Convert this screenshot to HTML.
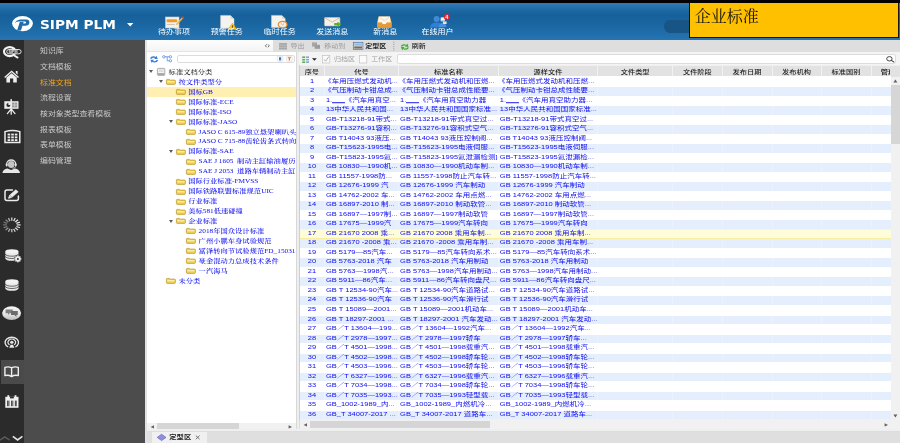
<!DOCTYPE html>
<html lang="zh-CN">
<head>
<meta charset="utf-8">
<title>SIPM PLM</title>
<style>
html,body{margin:0;padding:0;}
body{width:900px;height:443px;overflow:hidden;position:relative;background:#dddddd;font-family:"Liberation Sans","Noto Sans CJK SC",sans-serif;}
.abs,.abs *{position:absolute;}
div{position:absolute;box-sizing:border-box;white-space:nowrap;}
svg{position:absolute;overflow:visible;}
#blk{left:0;top:0;width:900px;height:3px;background:#050002;}
#hdr{left:0;top:2.8px;width:900px;height:37px;background:linear-gradient(to bottom,#2f7ab7 0%,#2873b0 8%,#1a659f 24%,#16619b 32%,#19659f 55%,#1f6daa 80%,#2575b3 100%);}
#logo-t{left:39.6px;top:16.6px;font:bold 12.3px/16px "DejaVu Sans","Liberation Sans",sans-serif;color:#fff;transform:scaleX(1.115);transform-origin:0 0;}
.hl{color:#fff;font-size:8px;line-height:11.25px;top:28.1px;text-align:center;width:40px;transform:scaleY(0.8);transform-origin:0 0;}
#pill{left:664px;top:20px;width:60px;height:12.7px;border-radius:6.4px;background:#195584;}
#ybox{left:689px;top:2.8px;width:210px;height:35.2px;background:#ffc000;border:1px solid #1b1400;border-top:none;}
#ybox div{left:4.8px;top:3.2px;font:16px/22px "Liberation Serif","Noto Serif CJK SC",serif;color:#111;}
#ibar{left:0;top:39.6px;width:24px;height:404px;background:#2b2b2b;}
#side{left:24px;top:39.6px;width:120.7px;height:404px;background:#4c4c4c;}
#iact{left:1px;top:360px;width:23px;height:24.3px;background:#4a4a4a;}
.mi{left:40px;color:#c9c9c9;font-size:7.9px;line-height:12.5px;transform:scaleY(0.8);transform-origin:0 0;}
.mi.on{color:#f2a31c;}
#strip{left:144.6px;top:39.6px;width:2.7px;height:404px;background:#e2e2e2;}
#tp{left:147.3px;top:39.6px;width:149px;height:391.6px;background:#fff;}
#tp1{left:147.3px;top:39.6px;width:126px;height:12.6px;background:linear-gradient(#fdfdfd,#f4f4f4);border-bottom:1px solid #e4e4e4;}
#tb1{left:273.3px;top:39.6px;width:626.7px;height:12.6px;background:#dedede;}
#tb2{left:299.3px;top:52.2px;width:600.7px;height:13px;background:#f4f4f4;}
#split{left:296.3px;top:52.2px;width:3.2px;height:379px;background:#eeeeee;border-left:1px solid #d8d8d8;}
.inp{background:#fff;border:1px solid #dcdcdc;border-radius:2px;}
.tt{font-size:7px;line-height:11.25px;color:#333;margin-top:0.8px;transform:scaleY(0.8);transform-origin:0 0;}
.tg{font-size:7px;line-height:11.25px;color:#9a9a9a;margin-top:0.8px;transform:scaleY(0.8);transform-origin:0 0;}
.tr{left:147px;width:148.8px;height:9.95px;overflow:hidden;}
.tr.sel{background:#ffefb0;}
.tx{font-family:"Liberation Serif","Noto Serif CJK SC",serif;font-size:7.3px;line-height:12.44px;top:0.9px;color:#0808f2;font-weight:500;transform:scaleY(0.8);transform-origin:0 0;}
.tx.k{color:#1a1a1a;}
.ar{width:0;height:0;border-left:2.1px solid transparent;border-right:2.1px solid transparent;border-top:3.2px solid #5c5c5c;top:3.4px;}
#gh{left:299.5px;top:65px;width:600.5px;height:11.7px;background:#e2e2e2;border-top:1px solid #efefef;}
.hc{top:68.3px;height:11.25px;font-size:7.2px;line-height:11.25px;transform:scaleY(0.8);transform-origin:0 0;color:#1e1e1e;text-align:center;font-weight:500;}
.hs{top:65.2px;width:1px;height:11.4px;background:#f2f2f2;}
.gr{left:299.5px;width:591.8px;height:9.514px;background:#fff;}
.gr.e{background:linear-gradient(to bottom,#fff 0.55px,#e5eefd 0.56px);}
.gr.y{background:linear-gradient(to bottom,#f8f0ac 0,#fffcda 0.9px,#fffcda 8.5px,#f7ee9f 9.3px);height:9.9px;z-index:2;}
.gr div{top:0;height:11.89px;line-height:11.25px;font-size:7.5px;color:#0c0cf0;overflow:hidden;font-weight:400;transform:scaleY(0.8);transform-origin:0 0;}
.gr span.q{margin-left:-1.7px;}
.gr span.u{background:linear-gradient(#0c0cf0,#0c0cf0) no-repeat 0 7.3px / 100% 1px;}
.gr .n{left:0;width:25px;text-align:center;}
.gr .a{left:26.4px;width:73.4px;}
.gr .b{left:100.6px;width:98px;}
.gr .c{left:200.3px;width:98px;}
.cs{width:1px;top:76.65px;height:342.6px;background:rgba(255,255,255,0.25);}
#vs{left:890.9px;top:76.6px;width:9.1px;height:343px;background:#f1f1f1;}
#vst{left:891.2px;top:85px;width:8.8px;height:58.7px;background:#d6d6d6;}
#hs{left:299.5px;top:419.3px;width:600.5px;height:9.4px;background:#f1f1f1;}
#hst{left:310px;top:421px;width:180px;height:7.4px;background:#d5d5d5;}
#ths{left:147.3px;top:422.6px;width:149px;height:8.4px;background:#f1f1f1;}
#thst{left:156.7px;top:423px;width:82px;height:7.4px;background:#d6d6d6;}
#bot{left:147.3px;top:431.6px;width:752.7px;height:11.8px;background:#dfdfdf;}
#tab{left:152px;top:431.6px;width:55.4px;height:11.8px;background:#f0f0f0;}
#tab div{left:17.3px;top:1.4px;font-size:7.3px;line-height:11.25px;font-weight:bold;color:#222;transform:scaleY(0.8);transform-origin:0 0;}
</style>
</head>
<body>
<div id="root" style="left:0;top:0;width:900px;height:443px;will-change:transform;">
<div id="blk"></div>
<div id="hdr"></div>

<svg style="left:11px;top:15px" width="24" height="17" viewBox="0 0 24 17">
<ellipse cx="11.5" cy="8.6" rx="10.4" ry="7.7" fill="#fff"/>
<path d="M9.6 4.4 L15.2 4.4 Q18.6 4.6 18.4 7.4 Q18.2 10.6 14.2 10.8 L11.4 10.8 L10 15.4 L6 15.8 L8.8 7 L12.6 7 L12.2 8.6 L14 8.6 Q15 8.4 15.1 7.5 Q15.1 6.6 14 6.6 L7 6.6 Q5 6.8 4 8.6 Q4.6 5 9.6 4.4 Z" fill="#1f6bab"/>
</svg>
<div id="logo-t">SIPM PLM</div>
<svg style="left:126.6px;top:23px" width="7" height="4" viewBox="0 0 7 4"><path d="M0 0 L6.4 0 L3.2 3.4 Z" fill="#fff"/></svg>
<svg style="left:164.5px;top:15.5px" width="20" height="13" viewBox="0 0 20 13">
<rect x="0.5" y="1" width="13.5" height="11" fill="#f3f1ec" stroke="#cfcac0" stroke-width="0.6"/>
<rect x="1.6" y="3.2" width="10.6" height="3.1" rx="1" fill="#f39a22"/>
<rect x="1.8" y="8" width="8" height="1" fill="#c9c5bb"/>
<path d="M17.6 0.4 L19 1.6 L12.6 8.6 L10.8 9.2 L11.4 7.4 Z" fill="#e8b25a"/>
<path d="M17.6 0.4 L19 1.6 L18 2.7 L16.6 1.5 Z" fill="#d2312b"/>
</svg>
<div class="hl" style="left:154px">待办事项</div>
<svg style="left:219.5px;top:14.6px" width="18" height="15" viewBox="0 0 18 15">
<path d="M0.6 0.4 L10.4 0.4 L14 4 L14 13.2 L0.6 13.2 Z" fill="#f4f3ef" stroke="#d6d3ca" stroke-width="0.5"/>
<path d="M10.4 0.4 L10.4 4 L14 4 Z" fill="#dcd9d0"/>
<path d="M12.4 8.2 L16.8 14.4 L8 14.4 Z" fill="#f7c51d" stroke="#d9a400" stroke-width="0.5"/>
<rect x="12" y="10.4" width="0.9" height="2.2" fill="#5a4500"/>
</svg>
<div class="hl" style="left:206.7px">预警任务</div>
<svg style="left:271.4px;top:15.2px" width="17" height="14" viewBox="0 0 17 14">
<path d="M0.5 0.4 L10.8 0.4 L14.2 3.8 L14.2 12.4 L0.5 12.4 Z" fill="#f4f3ef" stroke="#d6d3ca" stroke-width="0.5"/>
<path d="M10.8 0.4 L10.8 3.8 L14.2 3.8 Z" fill="#dcd9d0"/>
<ellipse cx="11.6" cy="9.6" rx="4.4" ry="3.2" fill="#f1eee8" stroke="#f08a1c" stroke-width="1.2"/>
<path d="M10.2 8.6 L11.6 9.9 L13 8.6" fill="none" stroke="#9a8f80" stroke-width="0.6"/>
</svg>
<div class="hl" style="left:259.7px">临时任务</div>
<svg style="left:323.6px;top:17.4px" width="18" height="10" viewBox="0 0 18 10">
<rect x="0.5" y="0.5" width="15.4" height="8.4" rx="0.8" fill="#f5f1e6" stroke="#c9c2ae" stroke-width="0.6"/>
<path d="M0.8 0.8 L8.2 5.2 L15.6 0.8" fill="none" stroke="#c8b48e" stroke-width="0.8"/>
<path d="M10.2 6 L13.4 6 L13.4 4.4 L17 7.2 L13.4 9.9 L13.4 8.4 L10.2 8.4 Z" fill="#58b32c"/>
</svg>
<div class="hl" style="left:312.2px">发送消息</div>
<svg style="left:377.4px;top:16.2px" width="16" height="12" viewBox="0 0 16 12">
<path d="M1.6 0.4 L13 0.4 L14.6 6.6 L14.6 10.8 Q14.6 11.7 13.6 11.7 L1 11.7 Q0 11.7 0 10.8 L0 6.6 Z" fill="#e9a23f"/>
<path d="M1.8 0.6 L12.8 0.6 L13.8 6.4 L9.6 6.4 L9 8 L5.6 8 L5 6.4 L0.8 6.4 Z" fill="#fbf7f0"/>
<path d="M2.6 1.4 L7.3 4.6 L12 1.4" fill="none" stroke="#f0c79a" stroke-width="0.7"/>
<path d="M0 6.8 L4.8 6.8 L5.4 8.4 L9.2 8.4 L9.8 6.8 L14.6 6.8 L14.6 10.8 Q14.6 11.7 13.6 11.7 L1 11.7 Q0 11.7 0 10.8 Z" fill="#e59a35"/>
</svg>
<div class="hl" style="left:365.2px">新消息</div>
<svg style="left:429px;top:14px" width="23" height="14" viewBox="0 0 23 14">
<circle cx="7.6" cy="5" r="3" fill="#3f8ad8"/>
<path d="M1 13.4 Q1.4 8.4 7.6 8.4 Q13.8 8.4 14.2 13.4 Z" fill="#2f7fd6"/>
<circle cx="13.4" cy="6" r="2.2" fill="#5a9be0"/>
<path d="M9.6 13 Q10.4 9 13.6 9 Q17 9 17.6 13 Z" fill="#4a90dc"/>
<rect x="11.8" y="3.4" width="4.2" height="3.2" fill="#eef2f6"/>
<rect x="14" y="7.4" width="3.6" height="2.6" fill="#e6e2d8"/>
<circle cx="17.8" cy="2.9" r="2.9" fill="#e3262c"/>
</svg>
<div style="left:445.3px;top:13.9px;font:bold 5.4px/6px 'Liberation Sans',sans-serif;color:#fff">4</div>
<div class="hl" style="left:417.5px">在线用户</div>
<div id="pill"></div>
<div id="ybox"><div>企业标准</div></div>
<div id="ibar"></div><div id="side"></div><div id="iact"></div><div id="strip"></div>
<div class="mi" style="top:47.30px">知识库</div>
<div class="mi" style="top:62.95px">文档模板</div>
<div class="mi on" style="top:78.60px">标准文档</div>
<div class="mi" style="top:94.25px">流程设置</div>
<div class="mi" style="top:109.90px">核对象类型查看模板</div>
<div class="mi" style="top:125.55px">报表模板</div>
<div class="mi" style="top:141.20px">表单模板</div>
<div class="mi" style="top:156.85px">编码管理</div>
<svg style="left:2px;top:46px" width="21" height="13" viewBox="0 0 21 13">
<ellipse cx="7.7" cy="5.6" rx="5.7" ry="4.5" fill="none" stroke="#f4f4f4" stroke-width="2.1"/>
<path d="M11.8 9.2 L15.6 11.6" stroke="#f0f0f0" stroke-width="1.9" stroke-linecap="round"/>
<rect x="4.7" y="3.5" width="14.4" height="4.3" rx="2.15" fill="#2b2b2b" stroke="#f4f4f4" stroke-width="0.9"/>
<text x="6.6" y="6.9" font-family="Liberation Sans,sans-serif" font-size="3.7" font-weight="bold" fill="#f2f2f2" style="position:static">SIPM</text>
</svg>
<svg style="left:4px;top:70.4px" width="16" height="13" viewBox="0 0 16 13">
<path d="M7.6 0.4 L15 7 L14 7.9 L7.6 2.3 L1.2 7.9 L0.2 7 Z" fill="#ededed"/>
<path d="M11.8 1 L13.6 1 L13.6 4.6 L11.8 3 Z" fill="#ededed"/>
<path d="M2.4 7.6 L7.6 3.2 L12.8 7.6 L12.8 12.4 L9.2 12.4 L9.2 8.6 L6 8.6 L6 12.4 L2.4 12.4 Z" fill="#ededed"/>
</svg>
<svg style="left:4px;top:99px" width="16" height="16" viewBox="0 0 16 16">
<rect x="6.4" y="0.2" width="1.6" height="2.4" fill="#ececec"/>
<rect x="0.3" y="2.2" width="14.2" height="7.6" fill="#ececec"/>
<circle cx="4.4" cy="6" r="2" fill="#2b2b2b"/>
<path d="M4.4 6 L4.4 3.6 A2.4 2.4 0 0 1 6.8 6 Z" fill="#ececec"/>
<rect x="8" y="3.6" width="5.2" height="4.8" fill="#8a8a8a"/>
<path d="M8 5.2 H13.2 M8 6.8 H13.2 M10.6 3.6 V8.4" stroke="#ececec" stroke-width="0.5"/>
<path d="M7.2 9.8 L7.2 15.2 M6.8 10.4 L3.4 14.6 M7.6 10.4 L11 14.6" stroke="#ececec" stroke-width="1.3" stroke-linecap="round"/>
</svg>
<svg style="left:4px;top:129.2px" width="18" height="15" viewBox="0 0 18 15">
<path d="M1 13.4 L1 2.6 Q8.4 0.2 15.8 2.6 L15.8 13.4 Z" fill="none" stroke="#ececec" stroke-width="1.5" stroke-linejoin="miter"/>
<g fill="#ececec">
<rect x="3.6" y="4.6" width="2.6" height="1.9"/><rect x="7.2" y="4.6" width="2.6" height="1.9"/><rect x="10.8" y="4.6" width="2.6" height="1.9"/>
<rect x="3.6" y="7.4" width="2.6" height="1.9"/><rect x="7.2" y="7.4" width="2.6" height="1.9"/><rect x="10.8" y="7.4" width="2.6" height="1.9"/>
<rect x="3.6" y="10.2" width="2.6" height="1.9"/><rect x="7.2" y="10.2" width="2.6" height="1.9"/><rect x="10.8" y="10.2" width="2.6" height="1.9"/>
</g></svg>
<svg style="left:2.4px;top:158.6px" width="19" height="15" viewBox="0 0 19 15">
<path d="M4.6 5.4 A4.6 4.4 0 0 1 13.8 5.4" fill="none" stroke="#e6e6e6" stroke-width="1.3"/>
<ellipse cx="9.2" cy="5.5" rx="3.3" ry="3.4" fill="#c4c4c4"/>
<rect x="3.8" y="4.4" width="1.8" height="3.2" rx="0.8" fill="#e6e6e6"/>
<rect x="12.8" y="4.4" width="1.8" height="3.2" rx="0.8" fill="#e6e6e6"/>
<path d="M13.6 7.4 Q13.4 9.2 10.6 9.4" fill="none" stroke="#e6e6e6" stroke-width="0.8"/>
<path d="M0.4 14 Q1 10.4 5.4 9.6 L9.2 11 L13 9.6 Q17.4 10.4 18 14 Z" fill="#e6e6e6"/>
</svg>
<svg style="left:4px;top:189px" width="16" height="13" viewBox="0 0 16 13">
<path d="M8.4 1 L3 1 Q1 1 1 3 L1 9.4 Q1 11.4 3 11.4 L12.4 11.4 Q14.4 11.4 14.4 9.4 L14.4 7" fill="none" stroke="#ececec" stroke-width="1.5" stroke-linecap="round"/>
<path d="M11.8 0.8 L14.2 2.8 L8 8.2 L4.4 9.4 L5.6 6.2 Z" fill="#ececec" stroke="#ececec" stroke-width="0.6" stroke-linejoin="round"/><path d="M6.2 6.6 L7.6 7.8" stroke="#2b2b2b" stroke-width="0.5"/>
</svg>
<svg style="left:2px;top:216.5px" width="20" height="16" viewBox="0 0 20 16"><path d="M9.80 3.78 L9.80 0.51" stroke="#e6e6e6" stroke-opacity="0.95" stroke-width="1.25" stroke-linecap="butt"/><path d="M11.68 4.10 L13.17 1.07" stroke="#e6e6e6" stroke-opacity="1.00" stroke-width="1.25" stroke-linecap="butt"/><path d="M13.26 4.99 L16.02 2.67" stroke="#e6e6e6" stroke-opacity="1.00" stroke-width="1.25" stroke-linecap="butt"/><path d="M14.33 6.32 L17.93 5.07" stroke="#e6e6e6" stroke-opacity="1.00" stroke-width="1.25" stroke-linecap="butt"/><path d="M14.70 7.90 L18.60 7.90" stroke="#e6e6e6" stroke-opacity="1.00" stroke-width="1.25" stroke-linecap="butt"/><path d="M14.33 9.48 L17.93 10.73" stroke="#e6e6e6" stroke-opacity="1.00" stroke-width="1.25" stroke-linecap="butt"/><path d="M13.26 10.81 L16.02 13.13" stroke="#e6e6e6" stroke-opacity="0.95" stroke-width="1.25" stroke-linecap="butt"/><path d="M11.68 11.70 L13.17 14.73" stroke="#e6e6e6" stroke-opacity="0.90" stroke-width="1.25" stroke-linecap="butt"/><path d="M9.80 12.02 L9.80 15.29" stroke="#e6e6e6" stroke-opacity="0.85" stroke-width="1.25" stroke-linecap="butt"/><path d="M7.92 11.70 L6.43 14.73" stroke="#e6e6e6" stroke-opacity="0.75" stroke-width="1.25" stroke-linecap="butt"/><path d="M6.34 10.81 L3.58 13.13" stroke="#e6e6e6" stroke-opacity="0.60" stroke-width="1.25" stroke-linecap="butt"/><path d="M5.27 9.48 L1.67 10.73" stroke="#e6e6e6" stroke-opacity="0.50" stroke-width="1.25" stroke-linecap="butt"/><path d="M4.90 7.90 L1.00 7.90" stroke="#e6e6e6" stroke-opacity="0.40" stroke-width="1.25" stroke-linecap="butt"/><path d="M5.27 6.32 L1.67 5.07" stroke="#e6e6e6" stroke-opacity="0.40" stroke-width="1.25" stroke-linecap="butt"/><path d="M6.34 4.99 L3.58 2.67" stroke="#e6e6e6" stroke-opacity="0.50" stroke-width="1.25" stroke-linecap="butt"/><path d="M7.92 4.10 L6.43 1.07" stroke="#e6e6e6" stroke-opacity="0.75" stroke-width="1.25" stroke-linecap="butt"/></svg>
<svg style="left:5.2px;top:248.6px" width="22" height="15" viewBox="0 0 22 15"><path d="M0.3 2.4 L0.3 9.6 A6.6 2.2 0 0 0 13.5 9.6 L13.5 2.4 Z" fill="#e8e8e8"/><ellipse cx="6.9" cy="2.4" rx="6.6" ry="2.2" fill="#f2f2f2"/><path d="M0.3 5 A6.6 2.2 0 0 0 13.5 5" fill="none" stroke="#2b2b2b" stroke-width="0.7"/><path d="M0.3 7.3 A6.6 2.2 0 0 0 13.5 7.3" fill="none" stroke="#2b2b2b" stroke-width="0.7"/><path d="M0.3 9.6 A6.6 2.2 0 0 0 13.5 9.6" fill="none" stroke="#2b2b2b" stroke-width="0.0"/><circle cx="12.9" cy="9.9" r="3.6" fill="#2b2b2b"/>
<g fill="#ececec"><circle cx="12.9" cy="9.9" r="2.6"/>
<rect x="12.2" y="6.4" width="1.4" height="7"/><rect x="9.4" y="9.2" width="7" height="1.4"/>
<rect x="12.2" y="6.4" width="1.4" height="7" transform="rotate(45 12.9 9.9)"/><rect x="12.2" y="6.4" width="1.4" height="7" transform="rotate(-45 12.9 9.9)"/></g>
<circle cx="12.9" cy="9.9" r="1" fill="#2b2b2b"/></svg>
<svg style="left:4.8px;top:278.6px" width="22" height="15" viewBox="0 0 22 15"><path d="M0.3 2.4 L0.3 9.6 A6.6 2.2 0 0 0 13.5 9.6 L13.5 2.4 Z" fill="#e8e8e8"/><ellipse cx="6.9" cy="2.4" rx="6.6" ry="2.2" fill="#f2f2f2"/><path d="M0.3 5 A6.6 2.2 0 0 0 13.5 5" fill="none" stroke="#2b2b2b" stroke-width="0.7"/><path d="M0.3 7.3 A6.6 2.2 0 0 0 13.5 7.3" fill="none" stroke="#2b2b2b" stroke-width="0.7"/><path d="M0.3 9.6 A6.6 2.2 0 0 0 13.5 9.6" fill="none" stroke="#2b2b2b" stroke-width="0.0"/></svg>
<svg style="left:2px;top:306px" width="20" height="15" viewBox="0 0 20 15">
<defs><linearGradient id="cg" x1="0" y1="0" x2="0" y2="1"><stop offset="0" stop-color="#f6f6f6"/><stop offset="0.6" stop-color="#e4e4e4"/><stop offset="1" stop-color="#bdbdbd"/></linearGradient></defs>
<ellipse cx="9.6" cy="7.1" rx="9.5" ry="6.9" fill="url(#cg)"/>
<path d="M3.6 3.4 L10.8 3.4 L10.8 7.2 L7.6 7.2 L6 9 L6 7.2 L3.6 7.2 Z" fill="#808080"/>
<path d="M9 5 L15.8 5 L15.8 9 L14.4 9 L14.4 11 L12.4 9 L9 9 Z" fill="#6c6c6c"/>
</svg>
<svg style="left:4px;top:336.2px" width="16" height="12" viewBox="0 0 16 12">
<path d="M4.2 11 A6.7 5.3 0 1 1 11.4 11" fill="none" stroke="#e8e8e8" stroke-width="1.3"/>
<path d="M5.6 8.8 A3.9 3.1 0 1 1 10 8.8" fill="none" stroke="#e8e8e8" stroke-width="1.2"/>
<ellipse cx="7.8" cy="6.3" rx="1.7" ry="1.5" fill="#e8e8e8"/>
<path d="M5.2 11.7 L6.6 8.8 L9 8.8 L10.4 11.7 Z" fill="#e8e8e8"/>
</svg>
<svg style="left:3.6px;top:366px" width="16" height="12" viewBox="0 0 16 12">
<path d="M0.9 1.4 Q4.6 0.2 7.6 1.8 Q10.6 0.2 14.3 1.4 L14.3 9.6 Q10.6 8.6 7.6 10.6 Q4.6 8.6 0.9 9.6 Z M7.6 1.8 L7.6 10.6" fill="none" stroke="#f0f0f0" stroke-width="1.4" stroke-linejoin="round"/>
</svg>
<svg style="left:4.6px;top:395px" width="14" height="13" viewBox="0 0 14 13">
<rect x="0.3" y="1.8" width="13.2" height="11" fill="#f0f0f0"/>
<rect x="2.4" y="0.2" width="1.8" height="3.2" fill="#f0f0f0"/><rect x="9.6" y="0.2" width="1.8" height="3.2" fill="#f0f0f0"/>
<rect x="5" y="1.8" width="3.8" height="1.6" fill="#2b2b2b"/>
<g fill="#2b2b2b"><rect x="2.2" y="5.6" width="1.4" height="5.6"/><rect x="6.2" y="5.6" width="1.4" height="5.6"/><rect x="10.2" y="5.6" width="1.4" height="5.6"/></g>
<rect x="4.4" y="5.6" width="0.6" height="5.6" fill="#777"/><rect x="8.6" y="5.6" width="0.6" height="5.6" fill="#777"/>
</svg>
<svg style="left:0px;top:435px" width="24" height="8" viewBox="0 0 24 8">
<path d="M0 5.2 L4.8 2 L9.6 5.2" fill="none" stroke="#5a5a5a" stroke-width="1.5"/>
<path d="M12.8 1.4 L17.6 5 L22.4 1.4" fill="none" stroke="#e2e2e2" stroke-width="1.7"/>
</svg>
<div id="tp"></div><div id="tp1"></div><div id="tb1"></div><div id="tb2"></div><div id="split"></div>
<svg style="left:264.6px;top:44.2px" width="5" height="4" viewBox="0 0 5 4"><path d="M1.6 0.4 L0.4 1.8 L1.6 3.2 M3 0.4 L4.2 1.8 L3 3.2" fill="none" stroke="#444" stroke-width="0.8"/></svg>
<svg style="left:279.3px;top:42.6px" width="9" height="7" viewBox="0 0 9 7"><rect x="0" y="0" width="8" height="6.6" fill="#a9a9a9"/><path d="M0 2.2 H8 M0 4.4 H8" stroke="#cfcfcf" stroke-width="0.5"/></svg>
<div class="tg" style="left:290.6px;top:41.4px">导出</div>
<svg style="left:312px;top:42.4px" width="9" height="8" viewBox="0 0 9 8"><rect x="0" y="0.4" width="5" height="4.2" fill="#a6a6a6"/><rect x="2.6" y="2.8" width="5.4" height="4" fill="#9c9c9c"/></svg>
<div class="tg" style="left:324.2px;top:41.4px">移动到</div>
<svg style="left:352.6px;top:42.2px" width="11" height="8" viewBox="0 0 11 8"><rect x="0.3" y="0.3" width="9.6" height="7" fill="#eaf1fa" stroke="#3c6ea8" stroke-width="0.7"/><rect x="1.2" y="1.2" width="7.8" height="2.6" fill="#9dbbe0"/><rect x="1.2" y="4.4" width="7.8" height="2.2" fill="#7d6b55"/></svg>
<div class="tt" style="left:365.2px;top:41.4px;font-weight:bold;color:#1a1a1a">定型区</div>
<svg style="left:392.8px;top:40.6px" width="2" height="11" viewBox="0 0 2 11"><path d="M0.8 0.6 V10" stroke="#9a9a9a" stroke-width="0.9" stroke-dasharray="1.2 1"/></svg>
<svg style="left:399.6px;top:42.8px" width="10" height="8" viewBox="0 0 10 8">
<path d="M0.6 3.4 Q1.6 0.8 4.8 1.2 L6.4 1.9 L7.4 0.6 L8.6 3.8 L5 3.8 L5.9 2.7 Q3.4 1.8 2.2 3.6 Z" fill="#3fae2a"/>
<path d="M8.8 3.9 Q7.8 6.5 4.6 6.1 L3 5.4 L2 6.7 L0.8 3.5 L4.4 3.5 L3.5 4.6 Q6 5.5 7.2 3.7 Z" fill="#3fae2a" transform="translate(0.2 0.6)"/>
</svg>
<div class="tt" style="left:411.8px;top:41.4px;font-weight:500;color:#1c1c1c">刷新</div>
<svg style="left:148.6px;top:55px" width="10.6" height="9" viewBox="0 0 9 8">
<path d="M0.6 3.2 Q1.4 0.8 4.4 1.1 L5.6 1.7 L6.4 0.6 L7.6 3.6 L4.4 3.6 L5.2 2.6 Q3.2 1.8 2.2 3.4 Z" fill="#3d7de0"/>
<path d="M7.8 4 Q7 6.4 4 6.1 L2.8 5.5 L2 6.6 L0.8 3.6 L4 3.6 L3.2 4.6 Q5.2 5.4 6.2 3.8 Z" fill="#3d7de0" transform="translate(0.2 0.6)"/>
</svg>
<svg style="left:162.4px;top:55.4px" width="11" height="8" viewBox="0 0 11 8">
<circle cx="1.8" cy="1.8" r="1.2" fill="none" stroke="#3d7de0" stroke-width="0.7"/>
<circle cx="8.4" cy="1.8" r="1.2" fill="none" stroke="#3d7de0" stroke-width="0.7"/>
<circle cx="8.4" cy="5.8" r="1.2" fill="none" stroke="#3d7de0" stroke-width="0.7"/>
<path d="M3 1.8 H7.2 M5.2 1.8 V5.8 H7.2" fill="none" stroke="#3d7de0" stroke-width="0.7"/>
</svg>
<div class="inp" style="left:176.6px;top:54.6px;width:118.8px;height:8.8px"></div>
<svg style="left:276.6px;top:56.4px" width="16" height="6" viewBox="0 0 16 6">
<rect x="0.3" y="0.3" width="5.6" height="5" rx="1" fill="#fff" stroke="#c9c9c9" stroke-width="0.5"/>
<rect x="2" y="1.2" width="2.2" height="3.2" fill="#2f7fd0"/>
<rect x="9.6" y="0.3" width="5.6" height="5" rx="1" fill="#fff" stroke="#c9c9c9" stroke-width="0.5"/>
<path d="M10.8 1.2 H14 V2.2 H13 V4.4 H11.8 V2.2 H10.8 Z" fill="#f0761c"/>
</svg>
<div class="tr" style="top:66.95px"><div class="ar" style="left:2.3px"></div><svg style="left:10.1px;top:1.2px" width="9" height="8" viewBox="0 0 9 8"><rect x="0.4" y="0.4" width="7.4" height="7" rx="0.8" fill="#f4f4f4" stroke="#8d8d8d" stroke-width="0.7"/><rect x="1.6" y="1.4" width="5" height="2.6" fill="#dedede"/><rect x="1" y="5.2" width="6.2" height="1.6" fill="#9a9a9a"/></svg><div class="tx k" style="left:21.6px">标准文档分类</div></div>
<div class="tr" style="top:76.90px"><div class="ar" style="left:12.1px"></div><svg style="left:19.4px;top:2.3px" width="10" height="6" viewBox="0 0 10 6"><path d="M0.4 1.2 Q0.4 0.4 1.2 0.4 L3.4 0.4 L4.2 1.1 L8.6 1.1 Q9.4 1.1 9.4 1.9 L9.4 4.6 Q9.4 5.4 8.6 5.4 L1.2 5.4 Q0.4 5.4 0.4 4.6 Z" fill="#f0cf55" stroke="#b9952a" stroke-width="0.7"/><rect x="1.3" y="2.2" width="7.2" height="1.1" fill="#fdf3c0"/></svg><div class="tx b" style="left:31.4px">按文件类型分</div></div>
<div class="tr sel" style="top:86.85px"><svg style="left:29.2px;top:2.3px" width="10" height="6" viewBox="0 0 10 6"><path d="M0.4 1.2 Q0.4 0.4 1.2 0.4 L3.4 0.4 L4.2 1.1 L8.6 1.1 Q9.4 1.1 9.4 1.9 L9.4 4.6 Q9.4 5.4 8.6 5.4 L1.2 5.4 Q0.4 5.4 0.4 4.6 Z" fill="#f0cf55" stroke="#b9952a" stroke-width="0.7"/><rect x="1.3" y="2.2" width="7.2" height="1.1" fill="#fdf3c0"/></svg><div class="tx b" style="left:41.2px">国标GB</div></div>
<div class="tr" style="top:96.80px"><svg style="left:29.2px;top:2.3px" width="10" height="6" viewBox="0 0 10 6"><path d="M0.4 1.2 Q0.4 0.4 1.2 0.4 L3.4 0.4 L4.2 1.1 L8.6 1.1 Q9.4 1.1 9.4 1.9 L9.4 4.6 Q9.4 5.4 8.6 5.4 L1.2 5.4 Q0.4 5.4 0.4 4.6 Z" fill="#f0cf55" stroke="#b9952a" stroke-width="0.7"/><rect x="1.3" y="2.2" width="7.2" height="1.1" fill="#fdf3c0"/></svg><div class="tx b" style="left:41.2px">国际标准-ECE</div></div>
<div class="tr" style="top:106.75px"><svg style="left:29.2px;top:2.3px" width="10" height="6" viewBox="0 0 10 6"><path d="M0.4 1.2 Q0.4 0.4 1.2 0.4 L3.4 0.4 L4.2 1.1 L8.6 1.1 Q9.4 1.1 9.4 1.9 L9.4 4.6 Q9.4 5.4 8.6 5.4 L1.2 5.4 Q0.4 5.4 0.4 4.6 Z" fill="#f0cf55" stroke="#b9952a" stroke-width="0.7"/><rect x="1.3" y="2.2" width="7.2" height="1.1" fill="#fdf3c0"/></svg><div class="tx b" style="left:41.2px">国际标准-ISO</div></div>
<div class="tr" style="top:116.70px"><div class="ar" style="left:21.9px"></div><svg style="left:29.2px;top:2.3px" width="10" height="6" viewBox="0 0 10 6"><path d="M0.4 1.2 Q0.4 0.4 1.2 0.4 L3.4 0.4 L4.2 1.1 L8.6 1.1 Q9.4 1.1 9.4 1.9 L9.4 4.6 Q9.4 5.4 8.6 5.4 L1.2 5.4 Q0.4 5.4 0.4 4.6 Z" fill="#f0cf55" stroke="#b9952a" stroke-width="0.7"/><rect x="1.3" y="2.2" width="7.2" height="1.1" fill="#fdf3c0"/></svg><div class="tx b" style="left:41.2px">国际标准-JASO</div></div>
<div class="tr" style="top:126.65px"><svg style="left:39.2px;top:2.3px" width="10" height="6" viewBox="0 0 10 6"><path d="M0.4 1.2 Q0.4 0.4 1.2 0.4 L3.4 0.4 L4.2 1.1 L8.6 1.1 Q9.4 1.1 9.4 1.9 L9.4 4.6 Q9.4 5.4 8.6 5.4 L1.2 5.4 Q0.4 5.4 0.4 4.6 Z" fill="#f0cf55" stroke="#b9952a" stroke-width="0.7"/><rect x="1.3" y="2.2" width="7.2" height="1.1" fill="#fdf3c0"/></svg><div class="tx b" style="left:51.6px">JASO C 615-89独立悬架喇叭头中</div></div>
<div class="tr" style="top:136.60px"><svg style="left:39.2px;top:2.3px" width="10" height="6" viewBox="0 0 10 6"><path d="M0.4 1.2 Q0.4 0.4 1.2 0.4 L3.4 0.4 L4.2 1.1 L8.6 1.1 Q9.4 1.1 9.4 1.9 L9.4 4.6 Q9.4 5.4 8.6 5.4 L1.2 5.4 Q0.4 5.4 0.4 4.6 Z" fill="#f0cf55" stroke="#b9952a" stroke-width="0.7"/><rect x="1.3" y="2.2" width="7.2" height="1.1" fill="#fdf3c0"/></svg><div class="tx b" style="left:51.6px">JASO C 715-88齿轮齿条式转向</div></div>
<div class="tr" style="top:146.55px"><div class="ar" style="left:21.9px"></div><svg style="left:29.2px;top:2.3px" width="10" height="6" viewBox="0 0 10 6"><path d="M0.4 1.2 Q0.4 0.4 1.2 0.4 L3.4 0.4 L4.2 1.1 L8.6 1.1 Q9.4 1.1 9.4 1.9 L9.4 4.6 Q9.4 5.4 8.6 5.4 L1.2 5.4 Q0.4 5.4 0.4 4.6 Z" fill="#f0cf55" stroke="#b9952a" stroke-width="0.7"/><rect x="1.3" y="2.2" width="7.2" height="1.1" fill="#fdf3c0"/></svg><div class="tx b" style="left:41.2px">国际标准-SAE</div></div>
<div class="tr" style="top:156.50px"><svg style="left:39.2px;top:2.3px" width="10" height="6" viewBox="0 0 10 6"><path d="M0.4 1.2 Q0.4 0.4 1.2 0.4 L3.4 0.4 L4.2 1.1 L8.6 1.1 Q9.4 1.1 9.4 1.9 L9.4 4.6 Q9.4 5.4 8.6 5.4 L1.2 5.4 Q0.4 5.4 0.4 4.6 Z" fill="#f0cf55" stroke="#b9952a" stroke-width="0.7"/><rect x="1.3" y="2.2" width="7.2" height="1.1" fill="#fdf3c0"/></svg><div class="tx b" style="left:51.6px">SAE J 1605&nbsp; 制动主缸输油履历</div></div>
<div class="tr" style="top:166.45px"><svg style="left:39.2px;top:2.3px" width="10" height="6" viewBox="0 0 10 6"><path d="M0.4 1.2 Q0.4 0.4 1.2 0.4 L3.4 0.4 L4.2 1.1 L8.6 1.1 Q9.4 1.1 9.4 1.9 L9.4 4.6 Q9.4 5.4 8.6 5.4 L1.2 5.4 Q0.4 5.4 0.4 4.6 Z" fill="#f0cf55" stroke="#b9952a" stroke-width="0.7"/><rect x="1.3" y="2.2" width="7.2" height="1.1" fill="#fdf3c0"/></svg><div class="tx b" style="left:51.6px">SAE J 2053&nbsp; 道路车辆制动主缸</div></div>
<div class="tr" style="top:176.40px"><svg style="left:29.2px;top:2.3px" width="10" height="6" viewBox="0 0 10 6"><path d="M0.4 1.2 Q0.4 0.4 1.2 0.4 L3.4 0.4 L4.2 1.1 L8.6 1.1 Q9.4 1.1 9.4 1.9 L9.4 4.6 Q9.4 5.4 8.6 5.4 L1.2 5.4 Q0.4 5.4 0.4 4.6 Z" fill="#f0cf55" stroke="#b9952a" stroke-width="0.7"/><rect x="1.3" y="2.2" width="7.2" height="1.1" fill="#fdf3c0"/></svg><div class="tx b" style="left:41.2px">国际行业标准-FMVSS</div></div>
<div class="tr" style="top:186.35px"><svg style="left:29.2px;top:2.3px" width="10" height="6" viewBox="0 0 10 6"><path d="M0.4 1.2 Q0.4 0.4 1.2 0.4 L3.4 0.4 L4.2 1.1 L8.6 1.1 Q9.4 1.1 9.4 1.9 L9.4 4.6 Q9.4 5.4 8.6 5.4 L1.2 5.4 Q0.4 5.4 0.4 4.6 Z" fill="#f0cf55" stroke="#b9952a" stroke-width="0.7"/><rect x="1.3" y="2.2" width="7.2" height="1.1" fill="#fdf3c0"/></svg><div class="tx b" style="left:41.2px">国际铁路联盟标准规范UIC</div></div>
<div class="tr" style="top:196.30px"><svg style="left:29.2px;top:2.3px" width="10" height="6" viewBox="0 0 10 6"><path d="M0.4 1.2 Q0.4 0.4 1.2 0.4 L3.4 0.4 L4.2 1.1 L8.6 1.1 Q9.4 1.1 9.4 1.9 L9.4 4.6 Q9.4 5.4 8.6 5.4 L1.2 5.4 Q0.4 5.4 0.4 4.6 Z" fill="#f0cf55" stroke="#b9952a" stroke-width="0.7"/><rect x="1.3" y="2.2" width="7.2" height="1.1" fill="#fdf3c0"/></svg><div class="tx b" style="left:41.2px">行业标准</div></div>
<div class="tr" style="top:206.25px"><svg style="left:29.2px;top:2.3px" width="10" height="6" viewBox="0 0 10 6"><path d="M0.4 1.2 Q0.4 0.4 1.2 0.4 L3.4 0.4 L4.2 1.1 L8.6 1.1 Q9.4 1.1 9.4 1.9 L9.4 4.6 Q9.4 5.4 8.6 5.4 L1.2 5.4 Q0.4 5.4 0.4 4.6 Z" fill="#f0cf55" stroke="#b9952a" stroke-width="0.7"/><rect x="1.3" y="2.2" width="7.2" height="1.1" fill="#fdf3c0"/></svg><div class="tx b" style="left:41.2px">美标581低速碰撞</div></div>
<div class="tr" style="top:216.20px"><div class="ar" style="left:21.9px"></div><svg style="left:29.2px;top:2.3px" width="10" height="6" viewBox="0 0 10 6"><path d="M0.4 1.2 Q0.4 0.4 1.2 0.4 L3.4 0.4 L4.2 1.1 L8.6 1.1 Q9.4 1.1 9.4 1.9 L9.4 4.6 Q9.4 5.4 8.6 5.4 L1.2 5.4 Q0.4 5.4 0.4 4.6 Z" fill="#f0cf55" stroke="#b9952a" stroke-width="0.7"/><rect x="1.3" y="2.2" width="7.2" height="1.1" fill="#fdf3c0"/></svg><div class="tx b" style="left:41.2px">企业标准</div></div>
<div class="tr" style="top:226.15px"><svg style="left:39.2px;top:2.3px" width="10" height="6" viewBox="0 0 10 6"><path d="M0.4 1.2 Q0.4 0.4 1.2 0.4 L3.4 0.4 L4.2 1.1 L8.6 1.1 Q9.4 1.1 9.4 1.9 L9.4 4.6 Q9.4 5.4 8.6 5.4 L1.2 5.4 Q0.4 5.4 0.4 4.6 Z" fill="#f0cf55" stroke="#b9952a" stroke-width="0.7"/><rect x="1.3" y="2.2" width="7.2" height="1.1" fill="#fdf3c0"/></svg><div class="tx b" style="left:51.6px">2018年国众设计标准</div></div>
<div class="tr" style="top:236.10px"><svg style="left:39.2px;top:2.3px" width="10" height="6" viewBox="0 0 10 6"><path d="M0.4 1.2 Q0.4 0.4 1.2 0.4 L3.4 0.4 L4.2 1.1 L8.6 1.1 Q9.4 1.1 9.4 1.9 L9.4 4.6 Q9.4 5.4 8.6 5.4 L1.2 5.4 Q0.4 5.4 0.4 4.6 Z" fill="#f0cf55" stroke="#b9952a" stroke-width="0.7"/><rect x="1.3" y="2.2" width="7.2" height="1.1" fill="#fdf3c0"/></svg><div class="tx b" style="left:51.6px">广州小鹏车身试验规范</div></div>
<div class="tr" style="top:246.05px"><svg style="left:39.2px;top:2.3px" width="10" height="6" viewBox="0 0 10 6"><path d="M0.4 1.2 Q0.4 0.4 1.2 0.4 L3.4 0.4 L4.2 1.1 L8.6 1.1 Q9.4 1.1 9.4 1.9 L9.4 4.6 Q9.4 5.4 8.6 5.4 L1.2 5.4 Q0.4 5.4 0.4 4.6 Z" fill="#f0cf55" stroke="#b9952a" stroke-width="0.7"/><rect x="1.3" y="2.2" width="7.2" height="1.1" fill="#fdf3c0"/></svg><div class="tx b" style="left:51.6px">富泽转向节试验规范FD_15031</div></div>
<div class="tr" style="top:256.00px"><svg style="left:39.2px;top:2.3px" width="10" height="6" viewBox="0 0 10 6"><path d="M0.4 1.2 Q0.4 0.4 1.2 0.4 L3.4 0.4 L4.2 1.1 L8.6 1.1 Q9.4 1.1 9.4 1.9 L9.4 4.6 Q9.4 5.4 8.6 5.4 L1.2 5.4 Q0.4 5.4 0.4 4.6 Z" fill="#f0cf55" stroke="#b9952a" stroke-width="0.7"/><rect x="1.3" y="2.2" width="7.2" height="1.1" fill="#fdf3c0"/></svg><div class="tx b" style="left:51.6px">豪金混动力总成技术条件</div></div>
<div class="tr" style="top:265.95px"><svg style="left:39.2px;top:2.3px" width="10" height="6" viewBox="0 0 10 6"><path d="M0.4 1.2 Q0.4 0.4 1.2 0.4 L3.4 0.4 L4.2 1.1 L8.6 1.1 Q9.4 1.1 9.4 1.9 L9.4 4.6 Q9.4 5.4 8.6 5.4 L1.2 5.4 Q0.4 5.4 0.4 4.6 Z" fill="#f0cf55" stroke="#b9952a" stroke-width="0.7"/><rect x="1.3" y="2.2" width="7.2" height="1.1" fill="#fdf3c0"/></svg><div class="tx b" style="left:51.6px">一汽海马</div></div>
<div class="tr" style="top:275.90px"><svg style="left:19.4px;top:2.3px" width="10" height="6" viewBox="0 0 10 6"><path d="M0.4 1.2 Q0.4 0.4 1.2 0.4 L3.4 0.4 L4.2 1.1 L8.6 1.1 Q9.4 1.1 9.4 1.9 L9.4 4.6 Q9.4 5.4 8.6 5.4 L1.2 5.4 Q0.4 5.4 0.4 4.6 Z" fill="#f0cf55" stroke="#b9952a" stroke-width="0.7"/><rect x="1.3" y="2.2" width="7.2" height="1.1" fill="#fdf3c0"/></svg><div class="tx b" style="left:31.4px">未分类</div></div>
<div id="ths"></div><div id="thst"></div>
<svg style="left:150px;top:424.6px" width="5" height="4" viewBox="0 0 5 4"><path d="M4 0.2 L4 3.6 L0.6 1.9 Z" fill="#606060"/></svg>
<svg style="left:288px;top:424.6px" width="5" height="4" viewBox="0 0 5 4"><path d="M0.6 0.2 L0.6 3.6 L4 1.9 Z" fill="#606060"/></svg>
<svg style="left:302px;top:56px" width="16" height="8" viewBox="0 0 16 8">
<g fill="#5fae55"><rect x="0.2" y="0.4" width="2.8" height="1.6"/><rect x="0.2" y="2.9" width="2.8" height="1.6"/><rect x="0.2" y="5.4" width="2.8" height="1.6"/></g>
<g fill="#8aa6c9"><rect x="3.8" y="0.4" width="3.2" height="1.6"/><rect x="3.8" y="2.9" width="3.2" height="1.6"/><rect x="3.8" y="5.4" width="3.2" height="1.6"/></g>
<path d="M10 2.2 L14.8 2.2 L12.4 4.8 Z" fill="#222"/></svg>
<svg style="left:322px;top:55.2px" width="9" height="9" viewBox="0 0 9 9"><rect x="0.4" y="0.6" width="7.4" height="7.4" fill="#fbfbfb" stroke="#c2c2c2" stroke-width="0.7"/><path d="M2 4.4 L3.6 6.2 L6.8 1.6" fill="none" stroke="#a8a8a8" stroke-width="0.9"/></svg>
<div class="tg" style="left:334px;top:53.8px;color:#a3a3a3">归档区</div>
<svg style="left:359.2px;top:55.2px" width="9" height="9" viewBox="0 0 9 9"><rect x="0.4" y="0.6" width="7.4" height="7.4" fill="#fbfbfb" stroke="#c2c2c2" stroke-width="0.7"/></svg>
<div class="tg" style="left:371.2px;top:53.8px;color:#a3a3a3">工作区</div>
<div class="inp" style="left:397.2px;top:54.2px;width:499px;height:9.6px"></div>
<svg style="left:885.6px;top:55.6px" width="9" height="7" viewBox="0 0 9 7"><ellipse cx="3.4" cy="2.8" rx="2.7" ry="2.2" fill="none" stroke="#444" stroke-width="1"/><path d="M5.4 4.4 L7.8 6" stroke="#444" stroke-width="1.1" stroke-linecap="round"/></svg>
<div id="gh"></div>
<div class="hc" style="left:299.5px;width:24.7px">序号</div>
<div class="hs" style="left:323.7px"></div>
<div class="hc" style="left:324.2px;width:74.4px">代号</div>
<div class="hs" style="left:398.1px"></div>
<div class="hc" style="left:398.6px;width:99.8px">标准名称</div>
<div class="hs" style="left:497.9px"></div>
<div class="hc" style="left:498.4px;width:99.2px">源样文件</div>
<div class="hs" style="left:597.1px"></div>
<div class="hc" style="left:597.6px;width:75.1px">文件类型</div>
<div class="hs" style="left:672.2px"></div>
<div class="hc" style="left:672.7px;width:49.3px">文件阶段</div>
<div class="hs" style="left:721.5px"></div>
<div class="hc" style="left:722.0px;width:50.0px">发布日期</div>
<div class="hs" style="left:771.5px"></div>
<div class="hc" style="left:772.0px;width:49.0px">发布机构</div>
<div class="hs" style="left:820.5px"></div>
<div class="hc" style="left:821.0px;width:50.0px">标准国别</div>
<div class="hs" style="left:870.5px"></div>
<div class="hc" style="left:880.8px;width:9.6px;overflow:hidden;text-align:left;font-weight:bold">管理</div>
<div style="left:299.5px;top:76px;width:591.8px;height:343.6px;background:#fff"></div>
<div class="gr" style="top:76.650px"><div class="n">1</div><div class="a"><span class="q">《</span>车用压燃式发动机...</div><div class="b"><span class="q">《</span>车用压燃式发动机和压燃...</div><div class="c"><span class="q">《</span>车用压燃式发动机和压燃...</div></div>
<div class="gr e" style="top:86.164px"><div class="n">2</div><div class="a"><span class="q">《</span>气压制动卡钳总成...</div><div class="b"><span class="q">《</span>气压制动卡钳总成性能要...</div><div class="c"><span class="q">《</span>气压制动卡钳总成性能要...</div></div>
<div class="gr" style="top:95.678px"><div class="n">3</div><div class="a">1.<span class="u">___</span>《汽车用真空...</div><div class="b">1.<span class="u">___</span>《汽车用真空助力器</div><div class="c">1.<span class="u">___</span>《汽车用真空助力器...</div></div>
<div class="gr e" style="top:105.192px"><div class="n">4</div><div class="a">13中华人民共和国...</div><div class="b">13中华人民共和国国家标准...</div><div class="c">13中华人民共和国国家标准...</div></div>
<div class="gr" style="top:114.706px"><div class="n">5</div><div class="a">GB-T13218-91带式...</div><div class="b">GB-T13218-91带式真空过...</div><div class="c">GB-T13218-91带式真空过...</div></div>
<div class="gr e" style="top:124.220px"><div class="n">6</div><div class="a">GB-T13276-91容积...</div><div class="b">GB-T13276-91容积式空气...</div><div class="c">GB-T13276-91容积式空气...</div></div>
<div class="gr" style="top:133.734px"><div class="n">7</div><div class="a">GB T14043 93液压...</div><div class="b">GB T14043 93液压控制阀...</div><div class="c">GB T14043 93液压控制阀...</div></div>
<div class="gr e" style="top:143.248px"><div class="n">8</div><div class="a">GB-T15623-1995电...</div><div class="b">GB-T15623-1995电液伺服...</div><div class="c">GB-T15623-1995电液伺服...</div></div>
<div class="gr" style="top:152.762px"><div class="n">9</div><div class="a">GB-T15823-1995氦...</div><div class="b">GB-T15823-1995氦泄漏检测]</div><div class="c">GB-T15823-1995氦泄漏检...</div></div>
<div class="gr e" style="top:162.276px"><div class="n">10</div><div class="a">GB 10830—1990机...</div><div class="b">GB 10830—1990机动车制...</div><div class="c">GB 10830—1990机动车制...</div></div>
<div class="gr" style="top:171.790px"><div class="n">11</div><div class="a">GB 11557-1998防...</div><div class="b">GB 11557-1998防止汽车转...</div><div class="c">GB 11557-1998防止汽车转...</div></div>
<div class="gr e" style="top:181.304px"><div class="n">12</div><div class="a">GB 12676-1999 汽</div><div class="b">GB 12676-1999 汽车制动</div><div class="c">GB 12676-1999 汽车制动</div></div>
<div class="gr" style="top:190.818px"><div class="n">13</div><div class="a">GB 14762-2002 车...</div><div class="b">GB 14762-2002 车用点燃...</div><div class="c">GB 14762-2002 车用点燃...</div></div>
<div class="gr e" style="top:200.332px"><div class="n">14</div><div class="a">GB 16897-2010 制...</div><div class="b">GB 16897-2010 制动软管...</div><div class="c">GB 16897-2010 制动软管...</div></div>
<div class="gr" style="top:209.846px"><div class="n">15</div><div class="a">GB 16897—1997制...</div><div class="b">GB 16897—1997制动软管</div><div class="c">GB 16897—1997制动软管...</div></div>
<div class="gr e" style="top:219.360px"><div class="n">16</div><div class="a">GB 17675—1999汽</div><div class="b">GB 17675—1999汽车转向</div><div class="c">GB 17675—1999汽车转向</div></div>
<div class="gr y" style="top:228.874px"><div class="n">17</div><div class="a">GB 21670 2008 乘...</div><div class="b">GB 21670 2008 乘用车制...</div><div class="c">GB 21670 2008 乘用车制...</div></div>
<div class="gr e" style="top:238.388px"><div class="n">18</div><div class="a">GB 21670 -2008 乘...</div><div class="b">GB 21670 -2008 乘用车制...</div><div class="c">GB 21670 -2008 乘用车制...</div></div>
<div class="gr" style="top:247.902px"><div class="n">19</div><div class="a">GB 5179—85汽车...</div><div class="b">GB 5179—85汽车转向系术...</div><div class="c">GB 5179—85汽车转向系术...</div></div>
<div class="gr e" style="top:257.416px"><div class="n">20</div><div class="a">GB 5763-2018 汽车</div><div class="b">GB 5763-2018 汽车用制动</div><div class="c">GB 5763-2018 汽车用制动</div></div>
<div class="gr" style="top:266.930px"><div class="n">21</div><div class="a">GB 5763—1998汽...</div><div class="b">GB 5763—1998汽车用制动...</div><div class="c">GB 5763—1998汽车用制动...</div></div>
<div class="gr e" style="top:276.444px"><div class="n">22</div><div class="a">GB 5911—86汽车...</div><div class="b">GB 5911—86汽车转向盘尺...</div><div class="c">GB 5911—86汽车转向盘尺...</div></div>
<div class="gr" style="top:285.958px"><div class="n">23</div><div class="a">GB T 12534-90汽车...</div><div class="b">GB T 12534-90汽车道路试...</div><div class="c">GB T 12534-90汽车道路试...</div></div>
<div class="gr e" style="top:295.472px"><div class="n">24</div><div class="a">GB T 12536-90汽车</div><div class="b">GB T 12536-90汽车滑行试</div><div class="c">GB T 12536-90汽车滑行试</div></div>
<div class="gr" style="top:304.986px"><div class="n">25</div><div class="a">GB T 15089—2001...</div><div class="b">GB T 15089—2001机动车...</div><div class="c">GB T 15089—2001机动车...</div></div>
<div class="gr e" style="top:314.500px"><div class="n">26</div><div class="a">GB T 18297-2001 ...</div><div class="b">GB T 18297-2001 汽车发动...</div><div class="c">GB T 18297-2001 汽车发动...</div></div>
<div class="gr" style="top:324.014px"><div class="n">27</div><div class="a">GB／T 13604—199...</div><div class="b">GB／T 13604—1992汽车...</div><div class="c">GB／T 13604—1992汽车...</div></div>
<div class="gr e" style="top:333.528px"><div class="n">28</div><div class="a">GB／T 2978—1997...</div><div class="b">GB／T 2978—1997轿车</div><div class="c">GB／T 2978—1997轿车...</div></div>
<div class="gr" style="top:343.042px"><div class="n">29</div><div class="a">GB／T 4501—1998...</div><div class="b">GB／T 4501—1998载重汽...</div><div class="c">GB／T 4501—1998载重汽...</div></div>
<div class="gr e" style="top:352.556px"><div class="n">30</div><div class="a">GB／T 4502—1998...</div><div class="b">GB／T 4502—1998轿车轮...</div><div class="c">GB／T 4502—1998轿车轮...</div></div>
<div class="gr" style="top:362.070px"><div class="n">31</div><div class="a">GB／T 4503—1996...</div><div class="b">GB／T 4503—1996轿车轮...</div><div class="c">GB／T 4503—1996轿车轮...</div></div>
<div class="gr e" style="top:371.584px"><div class="n">32</div><div class="a">GB／T 6327—1996...</div><div class="b">GB／T 6327—1996载重汽...</div><div class="c">GB／T 6327—1996载重汽...</div></div>
<div class="gr" style="top:381.098px"><div class="n">33</div><div class="a">GB／T 7034—1998...</div><div class="b">GB／T 7034—1998轿车轮...</div><div class="c">GB／T 7034—1998轿车轮...</div></div>
<div class="gr e" style="top:390.612px"><div class="n">34</div><div class="a">GB／T 7035—1993...</div><div class="b">GB／T 7035—1993轻型载...</div><div class="c">GB／T 7035—1993轻型载...</div></div>
<div class="gr" style="top:400.126px"><div class="n">35</div><div class="a">GB_1002-1989_内...</div><div class="b">GB_1002-1989_内燃机冷...</div><div class="c">GB_1002-1989_内燃机冷...</div></div>
<div class="gr e" style="top:409.640px"><div class="n">36</div><div class="a">GB_T 34007-2017 ...</div><div class="b">GB_T 34007-2017 道路车...</div><div class="c">GB_T 34007-2017 道路车...</div></div>
<div class="cs" style="left:323.7px"></div>
<div class="cs" style="left:398.1px"></div>
<div class="cs" style="left:497.9px"></div>
<div class="cs" style="left:597.1px"></div>
<div class="cs" style="left:672.2px"></div>
<div class="cs" style="left:721.5px"></div>
<div class="cs" style="left:771.5px"></div>
<div class="cs" style="left:820.5px"></div>
<div class="cs" style="left:870.5px"></div>
<div style="left:298.9px;top:65px;width:0.8px;height:355px;background:#cfcfcf"></div>
<div id="vs"></div><div id="vst"></div>
<svg style="left:893.4px;top:79.4px" width="5" height="4" viewBox="0 0 5 4"><path d="M0.4 3.4 L4.4 3.4 L2.4 0.4 Z" fill="#606060"/></svg>
<svg style="left:893.4px;top:413.6px" width="5" height="4" viewBox="0 0 5 4"><path d="M0.4 0.4 L4.4 0.4 L2.4 3.4 Z" fill="#606060"/></svg>
<div id="hs"></div><div id="hst"></div>
<svg style="left:303.4px;top:422.6px" width="5" height="4" viewBox="0 0 5 4"><path d="M4 0.2 L4 3.6 L0.6 1.9 Z" fill="#606060"/></svg>
<svg style="left:883.6px;top:422.6px" width="5" height="4" viewBox="0 0 5 4"><path d="M0.6 0.2 L0.6 3.6 L4 1.9 Z" fill="#606060"/></svg>
<div style="left:147.3px;top:428.7px;width:752.7px;height:2.6px;background:#efefef"></div>
<div id="bot"></div><div id="tab"><div>定型区</div></div>
<svg style="left:157.2px;top:433.6px" width="10" height="7" viewBox="0 0 10 7"><path d="M4.6 0.2 L9 3.4 L4.6 6.6 L0.2 3.4 Z" fill="#8f8fe0" stroke="#5a5ab8" stroke-width="0.6"/></svg>
<svg style="left:194.8px;top:435px" width="6" height="5" viewBox="0 0 6 5"><path d="M0.8 0.6 L4.6 4.2 M4.6 0.6 L0.8 4.2" stroke="#555" stroke-width="0.8"/></svg>
</div>
</body></html>
